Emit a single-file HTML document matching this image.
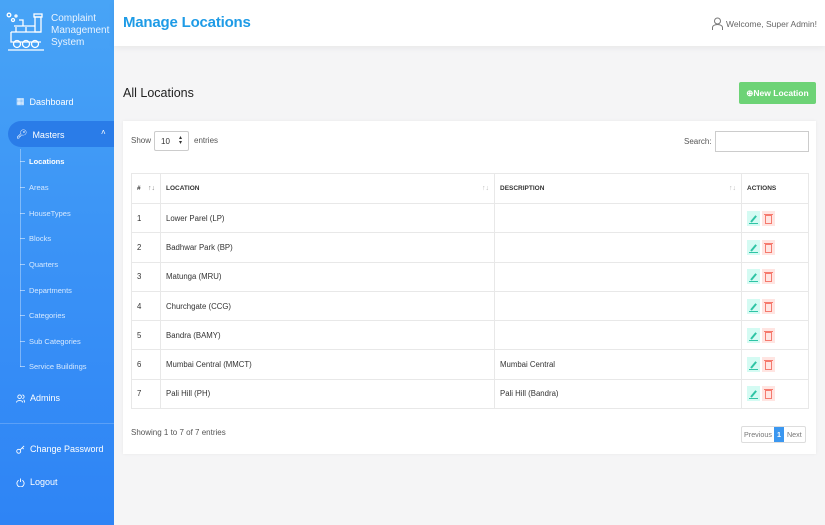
<!DOCTYPE html>
<html><head><meta charset="utf-8"><style>
*{box-sizing:border-box;margin:0;padding:0}
body{width:825px;height:525px;overflow:hidden;font-family:"Liberation Sans",sans-serif;background:#f5f5f6;position:relative}
.sb{position:absolute;left:0;top:0;width:114px;height:525px;background:linear-gradient(180deg,#48a4f6 0%,#3a92f6 50%,#2e84f5 100%);color:#fff}
.logo-t{position:absolute;left:51px;top:13px;font-size:10px;line-height:12px;color:#e8f3ff}
.it{position:absolute;left:16px;font-size:9px;color:#fff;display:flex;align-items:center;gap:5px}
.act{position:absolute;left:8px;top:121px;width:106px;height:26px;background:#2a7ce8;border-radius:13px 0 0 13px}
.sub{position:absolute;left:29px;font-size:7.5px;color:#d6e9ff}
.line{position:absolute;left:20px;top:149px;width:1px;height:218px;background:rgba(255,255,255,.35)}
.tick{position:absolute;left:20px;width:5px;height:1px;background:rgba(255,255,255,.5)}
.hdr{position:absolute;left:114px;top:0;right:0;height:46px;background:#fff;box-shadow:0 2px 6px rgba(0,0,0,.06)}
.hdr h1{position:absolute;left:9px;top:14px;font-size:15px;color:#1e9be6;font-weight:bold;letter-spacing:-0.2px}
.wel{position:absolute;right:8px;top:17px;font-size:8.5px;color:#666}
.card{position:absolute;left:123px;top:121px;width:693px;height:333px;background:#fff;box-shadow:0 0 3px rgba(0,0,0,.06)}
.t{position:absolute;font-size:8px;color:#555}
table{position:absolute;left:8px;top:52px;width:678px;border-collapse:collapse}
td,th{border:1px solid #e8e8e8;font-size:7.8px;color:#333;text-align:left;padding:0 5px;height:29.3px;font-weight:normal}
th{font-size:6.5px;font-weight:bold;height:30px}
.e{display:inline-block;width:13px;height:15px;background:#d4fbf3;vertical-align:middle;margin-right:2px;position:relative}
.d{display:inline-block;width:13px;height:15px;background:#ffe5e2;vertical-align:middle;position:relative}
.ar{color:#bbb;float:right;font-size:7px;font-weight:normal}
</style></head><body>
<div class="sb">
<svg style="position:absolute;left:6px;top:12px" width="40" height="40" viewBox="0 0 40 40" fill="none" stroke="#fff" stroke-width="1.3"><circle cx="3" cy="3" r="1.8"/><circle cx="7" cy="8" r="1.5"/><circle cx="10" cy="4" r="1"/><rect x="28" y="2" width="8" height="3"/><rect x="29" y="5" width="6" height="15"/><path d="M13 8h4v6M8 14h21M5 20h30M5 20v10h30M10 15v5M20 15v5"/><circle cx="11" cy="32" r="3.5"/><circle cx="20" cy="32" r="3.5"/><circle cx="29" cy="32" r="3.5"/><path d="M2 38h36"/></svg>
<div class="logo-t">Complaint<br>Management<br>System</div>
<div class="it" style="top:96px"><span style="font-size:9px">▦</span>Dashboard</div>
<div class="act"></div>
<div class="it" style="top:129px">🔑&#xFE0E;<span>Masters</span></div>
<div style="position:absolute;left:101px;top:128px;font-size:8px">˄</div>
<div class="line"></div>
<div class="tick" style="top:161px"></div><div class="sub" style="top:157px;color:#fff;font-weight:bold">Locations</div>
<div class="tick" style="top:187px"></div><div class="sub" style="top:183px">Areas</div>
<div class="tick" style="top:213px"></div><div class="sub" style="top:209px">HouseTypes</div>
<div class="tick" style="top:238px"></div><div class="sub" style="top:234px">Blocks</div>
<div class="tick" style="top:264px"></div><div class="sub" style="top:260px">Quarters</div>
<div class="tick" style="top:290px"></div><div class="sub" style="top:286px">Departments</div>
<div class="tick" style="top:315px"></div><div class="sub" style="top:311px">Categories</div>
<div class="tick" style="top:341px"></div><div class="sub" style="top:337px">Sub Categories</div>
<div class="tick" style="top:366px"></div><div class="sub" style="top:362px">Service Buildings</div>
<div class="it" style="top:393px"><svg width="9" height="9" viewBox="0 0 10 10" fill="none" stroke="#fff"><circle cx="4" cy="3" r="2"/><path d="M0.5 9.5c0-3 7-3 7 0M7 1a2 2 0 010 4M8.5 6.5c1 .5 1 2 1 3"/></svg>Admins</div>
<div style="position:absolute;left:0;top:423px;width:114px;height:1px;background:rgba(255,255,255,.2)"></div>
<div class="it" style="top:444px"><svg width="9" height="9" viewBox="0 0 10 10" fill="none" stroke="#fff"><circle cx="3" cy="7" r="2.2"/><path d="M4.5 5.5L9 1M7 3l1.5 1.5"/></svg>Change Password</div>
<div class="it" style="top:477px"><svg width="9" height="9" viewBox="0 0 10 10" fill="none" stroke="#fff"><path d="M3 2.5a4 4 0 104 0M5 0.5v4"/></svg>Logout</div>
</div>
<div class="hdr"><h1>Manage Locations</h1>
<div class="wel"><svg width="11" height="13" viewBox="0 0 11 13" fill="none" stroke="#777" style="vertical-align:-3px;margin-right:3px"><circle cx="5.5" cy="4" r="3"/><path d="M0.5 13v-2.5a5 3 0 0110 0V13"/></svg>Welcome, Super Admin!</div></div>
<div style="position:absolute;left:123px;top:86px;font-size:12.5px;color:#222">All Locations</div>
<div style="position:absolute;left:739px;top:82px;width:77px;height:22px;background:#6dd376;border-radius:2px;color:#fff;font-size:8.5px;font-weight:bold;text-align:center;line-height:22px">⊕New Location</div>
<div class="card">
<div class="t" style="left:8px;top:15px">Show</div>
<div style="position:absolute;left:31px;top:10px;width:35px;height:20px;border:1px solid #ccc;border-radius:2px;font-size:8px;padding:5px 6px;color:#333">10<span style="position:absolute;right:6px;top:4px;font-size:6px;line-height:5px">▴<br>▾</span></div>
<div class="t" style="left:71px;top:15px">entries</div>
<div class="t" style="left:561px;top:16px">Search:</div>
<div style="position:absolute;left:592px;top:10px;width:94px;height:21px;border:1px solid #ccc"></div>
<table>
<tr><th style="width:29px">#<span class="ar" style="color:#888">↑↓</span></th><th style="width:334px">LOCATION<span class="ar">↑↓</span></th><th style="width:247px">DESCRIPTION<span class="ar">↑↓</span></th><th>ACTIONS</th></tr>
<tr><td>1</td><td>Lower Parel (LP)</td><td></td><td><span class="e"></span><span class="d"></span></td></tr>
<tr><td>2</td><td>Badhwar Park (BP)</td><td></td><td><span class="e"></span><span class="d"></span></td></tr>
<tr><td>3</td><td>Matunga (MRU)</td><td></td><td><span class="e"></span><span class="d"></span></td></tr>
<tr><td>4</td><td>Churchgate (CCG)</td><td></td><td><span class="e"></span><span class="d"></span></td></tr>
<tr><td>5</td><td>Bandra (BAMY)</td><td></td><td><span class="e"></span><span class="d"></span></td></tr>
<tr><td>6</td><td>Mumbai Central (MMCT)</td><td>Mumbai Central</td><td><span class="e"></span><span class="d"></span></td></tr>
<tr><td>7</td><td>Pali Hill (PH)</td><td>Pali Hill (Bandra)</td><td><span class="e"></span><span class="d"></span></td></tr>
</table>
<div class="t" style="left:8px;top:307px">Showing 1 to 7 of 7 entries</div>
<div style="position:absolute;left:618px;top:305px;height:17px;border:1px solid #ddd;border-radius:2px;display:flex;font-size:7.2px;color:#777;line-height:15px">
<span style="padding:0 2px">Previous</span><span style="background:#3b97f0;color:#fff;padding:0 3px;font-weight:bold">1</span><span style="padding:0 3px">Next</span></div>
</div>
<style>
.e::after{content:"";position:absolute;left:3px;top:3px;width:2px;height:8px;background:#2ec4a5;transform:rotate(40deg);transform-origin:bottom}
.e::before{content:"";position:absolute;left:2px;bottom:2px;width:9px;height:1px;background:#2ec4a5}
.d::after{content:"";position:absolute;left:3px;top:4px;width:5px;height:7px;border:1px solid #f57a6e}
.d::before{content:"";position:absolute;left:2px;top:3px;width:9px;height:1px;background:#f57a6e}
</style>
</body></html>
